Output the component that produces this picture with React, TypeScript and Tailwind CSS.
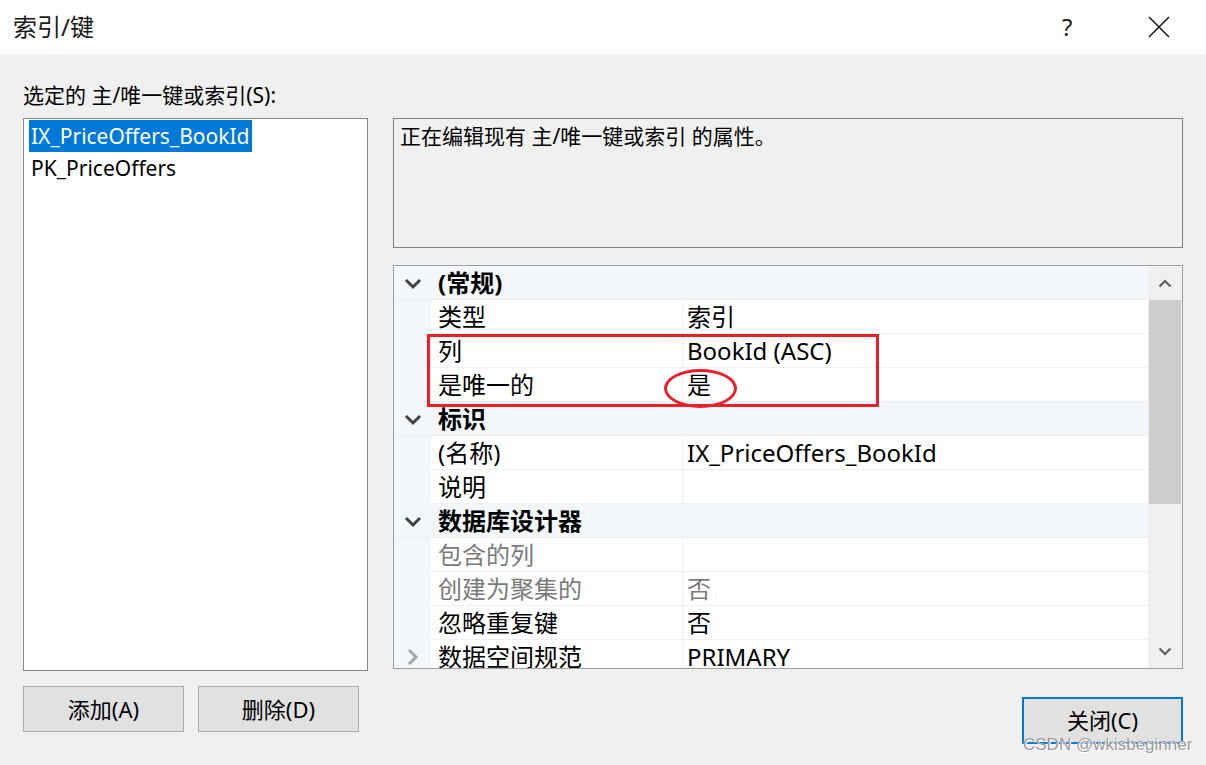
import React from "react";

const FONT = { fontFamily: '"Noto Sans", "Noto Sans CJK SC", sans-serif' };

function ChevronDown({ color = "#404040" }: { color?: string }) {
  return (
    <svg width="18" height="12" viewBox="0 0 18 12">
      <path d="M2 2 L9 9 L16 2" fill="none" stroke={color} strokeWidth="3" />
    </svg>
  );
}
function ChevronRight({ color = "#a6a6a6" }: { color?: string }) {
  return (
    <svg width="12" height="18" viewBox="0 0 12 18">
      <path d="M2 2 L9 9 L2 16" fill="none" stroke={color} strokeWidth="3" />
    </svg>
  );
}

type Row =
  | { kind: "cat"; label: string }
  | { kind: "prop"; name: string; value: string; dim?: boolean; dimValue?: boolean; expand?: boolean };

const rows: Row[] = [
  { kind: "cat", label: "(常规)" },
  { kind: "prop", name: "类型", value: "索引" },
  { kind: "prop", name: "列", value: "BookId (ASC)" },
  { kind: "prop", name: "是唯一的", value: "是" },
  { kind: "cat", label: "标识" },
  { kind: "prop", name: "(名称)", value: "IX_PriceOffers_BookId" },
  { kind: "prop", name: "说明", value: "" },
  { kind: "cat", label: "数据库设计器" },
  { kind: "prop", name: "包含的列", value: "", dim: true },
  { kind: "prop", name: "创建为聚集的", value: "否", dim: true, dimValue: true },
  { kind: "prop", name: "忽略重复键", value: "否" },
  { kind: "prop", name: "数据空间规范", value: "PRIMARY", expand: true },
];

export default function App() {
  return (
    <div className="relative w-[1206px] h-[765px] flex flex-col bg-[#f0f0f0] overflow-hidden text-black" style={FONT}>
      {/* Title bar */}
      <div className="h-[54px] bg-white flex items-center shrink-0">
        <div className="pl-[13px] text-[24px] leading-none text-[#1a1a1a] flex-1">索引/键</div>
        <div className="text-[24px] leading-none text-[#1a1a1a] w-[12px] mr-[74px]">?</div>
        <div className="mr-[36px] flex items-center">
          <svg width="22" height="22" viewBox="0 0 22 22">
            <path d="M1 1 L21 21 M21 1 L1 21" stroke="#1a1a1a" strokeWidth="1.6" />
          </svg>
        </div>
      </div>

      {/* Body */}
      <div className="flex-1 flex px-[23px] gap-[25px]">
        {/* Left column */}
        <div className="w-[345px] flex flex-col">
          <div className="mt-[29px] h-[24px] text-[21px] leading-[24px] whitespace-nowrap">选定的 主/唯一键或索引(S):</div>
          <div className="mt-[11px] h-[553px] bg-white border border-[#828790] pt-[1px] pl-[5px]">
            <div className="inline-block bg-[#0078d7] text-white text-[21px] leading-[32px] h-[32px] px-[2px]">IX_PriceOffers_BookId</div>
            <div className="text-[21px] leading-[32px] h-[32px] px-[2px]">PK_PriceOffers</div>
          </div>
          <div className="mt-[15px] flex gap-[14px]">
            <div className="w-[161px] h-[46px] bg-[#e1e1e1] border border-[#adadad] flex items-center justify-center text-[22px]">添加(A)</div>
            <div className="w-[161px] h-[46px] bg-[#e1e1e1] border border-[#adadad] flex items-center justify-center text-[22px]">删除(D)</div>
          </div>
        </div>

        {/* Right column */}
        <div className="w-[790px] flex flex-col">
          <div className="mt-[64px] h-[130px] border border-[#828282] px-[6px] pt-[3px] text-[21px] leading-[28px] whitespace-nowrap">
            正在编辑现有 主/唯一键或索引 的属性。
          </div>
          <div className="mt-[17px] h-[404px] border border-[#a0a0a0] flex bg-white overflow-hidden">
            <div className="flex-1 flex flex-col overflow-hidden">
              {rows.map((r, i) =>
                r.kind === "cat" ? (
                  <div key={i} className="h-[34px] shrink-0 flex items-center bg-[#f3f6fb] border-b border-[#eceef2]">
                    <div className="w-[37px] flex justify-center pt-[2px]">
                      <ChevronDown />
                    </div>
                    <div className="pl-[7px] text-[24px] font-bold leading-none">{r.label}</div>
                  </div>
                ) : (
                  <div key={i} className="h-[34px] shrink-0 flex">
                    <div className="w-[37px] bg-[#f3f6fb] flex items-center justify-center">
                      {r.expand ? <ChevronRight /> : null}
                    </div>
                    <div
                      className={
                        "w-[252px] border-b border-r border-[#f0f0f0] pl-[7px] flex items-center text-[24px] leading-none whitespace-nowrap " +
                        (r.dim ? "text-[#7a7a7a]" : "text-black")
                      }
                    >
                      {r.name}
                    </div>
                    <div
                      className={
                        "flex-1 border-b border-[#f0f0f0] pl-[4px] flex items-center text-[24px] leading-none whitespace-nowrap " +
                        (r.dimValue ? "text-[#7a7a7a]" : "text-black")
                      }
                    >
                      {r.value}
                    </div>
                  </div>
                )
              )}
            </div>
            {/* Scrollbar */}
            <div className="w-[34px] bg-[#f0f0f0] flex flex-col items-center">
              <div className="h-[34px] flex items-center justify-center">
                <svg width="14" height="9" viewBox="0 0 14 9">
                  <path d="M1.5 7.5 L7 2 L12.5 7.5" fill="none" stroke="#606060" strokeWidth="2.2" />
                </svg>
              </div>
              <div className="w-[32px] h-[204px] bg-[#cdcdcd]" />
              <div className="flex-1" />
              <div className="h-[34px] flex items-center justify-center">
                <svg width="14" height="9" viewBox="0 0 14 9">
                  <path d="M1.5 1.5 L7 7 L12.5 1.5" fill="none" stroke="#606060" strokeWidth="2.2" />
                </svg>
              </div>
            </div>
          </div>
          <div className="mt-[28px] flex justify-end">
            <div className="w-[161px] h-[47px] bg-[#e1e1e1] border-2 border-[#0078d7] flex items-center justify-center text-[22px]">关闭(C)</div>
          </div>
        </div>
      </div>

      {/* Annotations */}
      <div className="absolute left-[427px] top-[334px] w-[452px] h-[73px] border-[3px] border-[#e8202a] pointer-events-none" />
      <div className="absolute left-[664px] top-[369px] w-[73px] h-[39px] border-[3px] border-[#e8202a] rounded-[50%] pointer-events-none" />

      {/* Watermark */}
      <div
        className="absolute left-[1023px] top-[735px] text-[17px] leading-[20px] text-[#9a9a9a] whitespace-nowrap"
        style={{ fontFamily: '"Liberation Sans", Arial, sans-serif', textShadow: "0 0 1px #fff, 1px 1px 0 #fff" }}
      >
        CSDN @wkisbeginner
      </div>
    </div>
  );
}
